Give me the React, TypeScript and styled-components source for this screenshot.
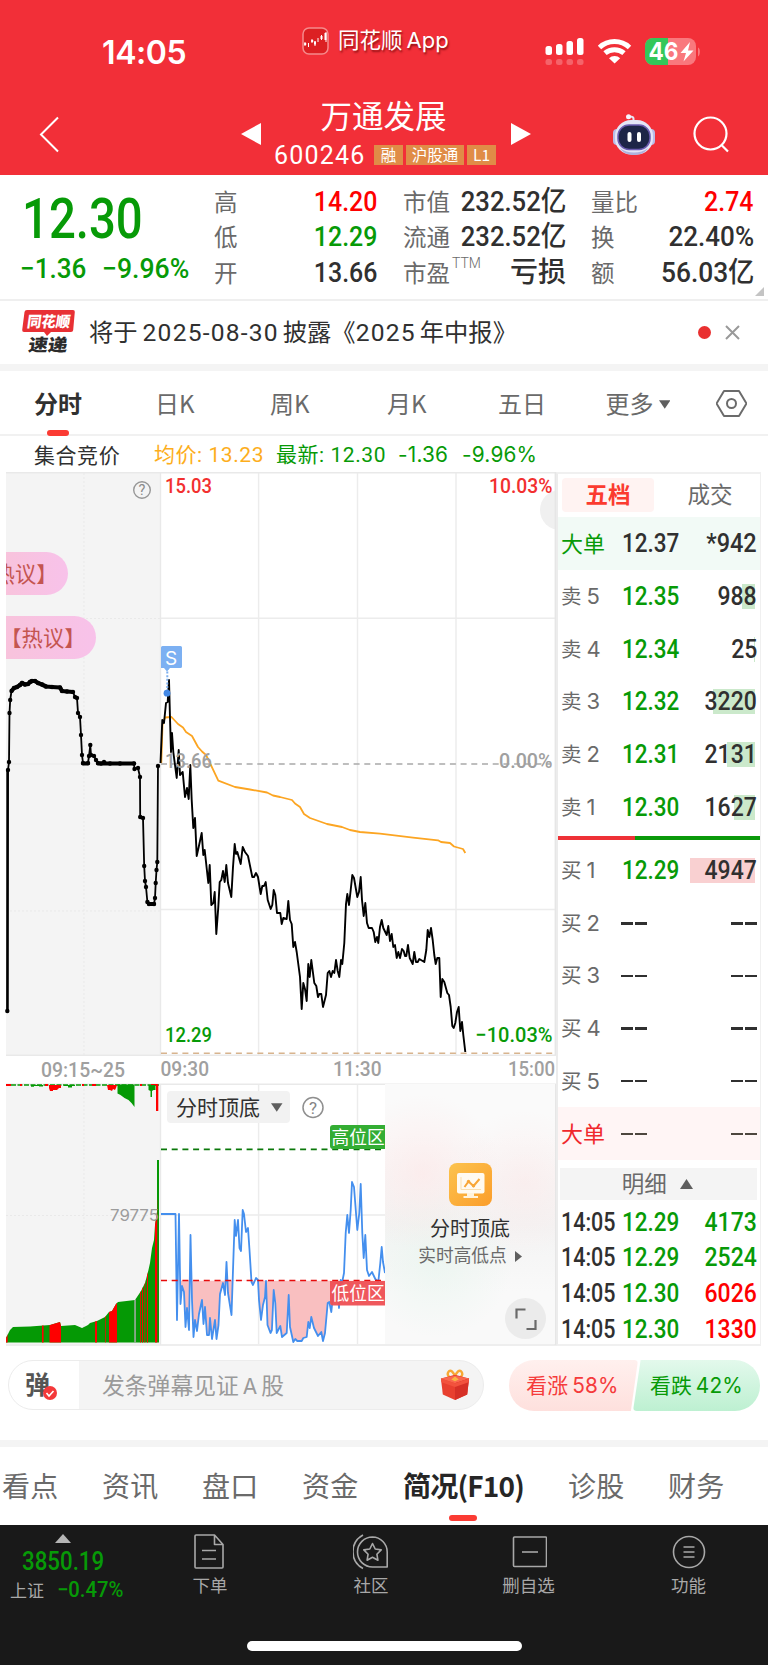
import React from "react";
import styled, { createGlobalStyle } from "styled-components";

const RED = "#f22f38";
const UP = "#fe0000";
const DOWN = "#079a07";
const INK = "#303030";
const GREY = "#6a6a6a";
const SANS = `"Noto Sans CJK SC", "Noto Sans", sans-serif`;
const DIGITS = `Roboto, "Noto Sans CJK SC", sans-serif`;

const Global = createGlobalStyle`
  * { box-sizing: border-box; }
  body { margin: 0; background: #fff; font-family: ${SANS}; color: ${INK}; }
`;

const Screen = styled.div`
  width: 768px;
  height: 1665px;
  display: flex;
  flex-direction: column;
  overflow: hidden;
  background: #fff;
`;

/* Condensed numerals; `$k` is the horizontal squeeze. */
const Num = styled.span<{ $size: number; $color?: string; $k?: number; $from?: string; $weight?: number }>`
  display: inline-block;
  font-family: ${DIGITS};
  font-size: ${(p) => p.$size}px;
  font-weight: ${(p) => p.$weight ?? 500};
  color: ${(p) => p.$color ?? INK};
  white-space: nowrap;
  transform: scaleX(${(p) => p.$k ?? 0.89});
  transform-origin: ${(p) => p.$from ?? "left"} center;
`;

/* ---------- header ---------- */
const Header = styled.header`
  height: 174.5px;
  flex: none;
  background: ${RED};
  color: #fff;
`;
const StatusBar = styled.div`
  display: grid;
  grid-template-columns: 302px 1fr 223px;
  height: 90px;
`;
const Clock = styled.div`
  font-family: Inter, sans-serif;
  font-weight: 600;
  font-size: 32px;
  line-height: 40px;
  padding: 33px 0 0 102px;
  letter-spacing: -0.4px;
`;
const Brand = styled.div`
  display: flex;
  align-items: center;
  gap: 9px;
  height: 28px;
  margin-top: 27px;
  font-size: 21.5px;
  line-height: 26px;
  white-space: nowrap;
  text-shadow: 1px 2px 2px rgba(90, 0, 0, 0.65);
  div { padding-bottom: 3px; }
  span { font-family: Inter, sans-serif; font-size: 22px; margin-left: 4px; }
`;
const Indicators = styled.div`
  display: flex;
  align-items: flex-start;
  padding-top: 37px;
`;
const NavBar = styled.div`
  display: flex;
  height: 84px;
`;
const NavSide = styled.div<{ $w: number; $pl: number; $pt: number }>`
  width: ${(p) => p.$w}px;
  padding: ${(p) => p.$pt}px 0 0 ${(p) => p.$pl}px;
  display: flex;
  align-items: flex-start;
`;
const TitleBlock = styled.div`
  width: 224px;
  margin-left: 13px;
  display: flex;
  flex-direction: column;
`;
const Title = styled.div`
  font-size: 31.5px;
  line-height: 40px;
  height: 50px;
  padding-top: 4px;
  text-align: center;
  width: 219px;
`;
const CodeRow = styled.div`
  display: flex;
  align-items: center;
  height: 30px;
  gap: 3px;
`;
const Code = styled.span`
  font-family: ${DIGITS};
  font-size: 25px;
  letter-spacing: 1.2px;
  width: 97px;
`;
const Tag = styled.span<{ $w: number }>`
  width: ${(p) => p.$w}px;
  height: 20px;
  line-height: 19px;
  font-size: 15.5px;
  text-align: center;
  background: #e08c47;
`;

/* ---------- quote ---------- */
const Quote = styled.section`
  display: flex;
  height: 126px;
  flex: none;
  border-bottom: 2px solid #efefef;
  position: relative;
`;
const Last = styled.div`
  width: 214px;
  padding-left: 20px;
`;
const LastPrice = styled.div`
  height: 72px;
  padding: 10px 0 0 2px;
  line-height: 68px;
`;
const Change = styled.div`
  display: flex;
  line-height: 44px;
  span:first-child { width: 82px; }
`;
const Facts = styled.div<{ $w: number; $gap: number }>`
  width: ${(p) => p.$w}px;
  margin-right: ${(p) => p.$gap}px;
  padding-top: 9px;
`;
const Fact = styled.div`
  display: flex;
  justify-content: space-between;
  align-items: center;
  height: 35.5px;
  line-height: 33px;
  white-space: nowrap;
`;
const FactLabel = styled.span`
  font-size: 23.5px;
  color: ${GREY};
  sup { font-size: 14px; position: relative; top: -5px; font-family: Roboto, sans-serif; font-weight: 300; margin-left: 2px; line-height: 0; }
`;
const Corner = styled.svg`
  position: absolute;
  right: 4px;
  bottom: 3px;
`;

/* ---------- news ---------- */
const News = styled.section`
  display: flex;
  align-items: center;
  height: 63.5px;
  flex: none;
  padding: 0 28px 0 22px;
  svg { overflow: visible; }
`;
const NewsText = styled.div`
  flex: 1;
  margin-left: 14px;
  padding-bottom: 4px;
  font-size: 24.3px;
  white-space: nowrap;
`;
const DateText = styled.span<{ $ml?: number }>`
  font-family: Roboto, sans-serif;
  letter-spacing: 1.2px;
  font-size: 24.6px;
  margin: 0 4px 0 ${(p) => p.$ml ?? 5}px;
`;
const Dot = styled.i`
  width: 13px;
  height: 13px;
  border-radius: 50%;
  background: #e93030;
  margin-right: 14px;
`;
const Band = styled.div`
  height: 7px;
  flex: none;
  background: #f4f4f4;
`;

/* ---------- period tabs ---------- */
const Periods = styled.nav`
  display: flex;
  height: 65px;
  flex: none;
  border-bottom: 2px solid #f1f1f1;
  padding-left: 34px;
  align-items: stretch;
`;
const Period = styled.div<{ $w: number; $on?: boolean }>`
  width: ${(p) => p.$w}px;
  line-height: 63px;
  font-size: 24px;
  color: ${(p) => (p.$on ? INK : GREY)};
  font-weight: ${(p) => (p.$on ? 700 : 400)};
  position: relative;
  white-space: nowrap;
  svg { vertical-align: 4px; margin-left: 5px; }
`;
const Underline = styled.i<{ $w: number; $x: number; $b: number }>`
  position: absolute;
  left: ${(p) => p.$x}px;
  bottom: ${(p) => p.$b}px;
  width: ${(p) => p.$w}px;
  height: 6px;
  border-radius: 3px;
  background: #fb3b33;
`;
const Summary = styled.div`
  display: flex;
  align-items: center;
  height: 36px;
  flex: none;
  padding: 1px 0 0 34px;
  font-size: 21px;
  white-space: nowrap;
`;
const SummaryItem = styled.span<{ $w: number; $c: string; $wide?: boolean; $drop?: number }>`
  width: ${(p) => p.$w}px;
  margin-top: ${(p) => p.$drop ?? 0}px;
  line-height: 30px;
  color: ${(p) => p.$c};
  font-family: ${(p) => (p.$wide ? "Inter, sans-serif" : DIGITS)};
  font-size: ${(p) => (p.$wide ? 20.8 : 21)}px;
  letter-spacing: ${(p) => (p.$wide ? 0.2 : 0.55)}px;
`;

/* ---------- market ---------- */
const Market = styled.section`
  display: flex;
  height: 874px;
  flex: none;
  padding-left: 6px;
`;
const ChartColumn = styled.div`
  position: relative;
  width: 550px;
  height: 874px;
  svg { display: block; overflow: visible; }
`;
const Promo = styled.div`
  position: absolute;
  left: 379px;
  top: 612px;
  width: 170px;
  height: 260px;
  display: flex;
  flex-direction: column;
  align-items: center;
  padding-top: 79px;
  background:
    radial-gradient(circle at 22% 34%, rgba(255, 226, 226, 0.5), transparent 36%),
    radial-gradient(circle at 82% 38%, rgba(255, 226, 226, 0.4), transparent 34%),
    radial-gradient(circle at 30% 68%, rgba(232, 245, 238, 0.7), transparent 36%),
    linear-gradient(#fafafa 20%, #f3f3f3 54%, #f9f9f9 80%);
`;
const PromoTitle = styled.div`
  font-size: 20px;
  line-height: 28px;
  margin-top: 8px;
`;
const PromoSub = styled.div`
  font-size: 17.7px;
  line-height: 24px;
  color: ${GREY};
  svg { display: inline-block; margin-left: 8px; }
`;
const Expand = styled.div`
  position: absolute;
  right: 9px;
  bottom: 5px;
  width: 41px;
  height: 41px;
  border-radius: 50%;
  background: #ebebeb;
  display: grid;
  place-items: center;
`;
const Selector = styled.div`
  position: absolute;
  left: 161px;
  top: 619px;
  width: 123px;
  height: 32px;
  line-height: 28px;
  border-radius: 4px;
  background: #f2f2f2;
  display: flex;
  align-items: center;
  justify-content: space-between;
  padding: 0 8px 0 9px;
  font-size: 21px;
  span { padding-bottom: 3px; }
`;
const Bubble = styled.div<{ $y: number; $w: number }>`
  position: absolute;
  left: 0;
  top: ${(p) => p.$y}px;
  width: ${(p) => p.$w}px;
  height: 43px;
  border-radius: 0 22px 22px 0;
  overflow: hidden;
  display: flex;
  justify-content: flex-end;
  align-items: center;
  padding: 0 10px 2px 0;
  font-size: 21.3px;
  color: #c45550;
  background: linear-gradient(90deg, #f8c3dc, #f8c2ea);
  white-space: nowrap;
`;

/* ---------- order book ---------- */
const Book = styled.div`
  width: 204.5px;
  height: 874px;
  border: 2px solid #f0f0f0;
  border-left: 2px solid #ececec;
  border-right-width: 1.5px;
`;
const BookTabs = styled.div`
  display: flex;
  height: 43px;
  padding: 4px 0 0 4px;
`;
const BookTab = styled.div<{ $on?: boolean }>`
  flex: none;
  width: ${(p) => (p.$on ? 92 : 112)}px;
  height: 34px;
  line-height: 31px;
  text-align: center;
  font-size: 22.5px;
  border-radius: 4px;
  color: ${(p) => (p.$on ? "#fb3b2f" : GREY)};
  background: ${(p) => (p.$on ? "#fff3f2" : "transparent")};
  font-weight: ${(p) => (p.$on ? 700 : 400)};
`;
const Level = styled.div<{ $bg?: string; $h?: number }>`
  display: grid;
  grid-template-columns: 60.5px minmax(0, 1fr) auto;
  align-items: center;
  height: ${(p) => p.$h ?? 52.8}px;
  padding: 0 2.5px 0 3px;
  background: ${(p) => p.$bg ?? "transparent"};
`;
const LevelLabel = styled.span<{ $c?: string }>`
  padding-bottom: 3px;
  font-size: ${(p) => (p.$c ? 22 : 20.5)}px;
  color: ${(p) => p.$c ?? GREY};
  white-space: nowrap;
  b { font-family: Inter, sans-serif; font-weight: 400; font-size: 22px; margin-left: 5px; }
`;
const Volume = styled.div<{ $bar: number; $c: string }>`
  height: 25px;
  line-height: 25px;
  width: 72px;
  text-align: right;
  background: linear-gradient(${(p) => p.$c}, ${(p) => p.$c}) no-repeat right 2.5px top / ${(p) => p.$bar}px 25px;
`;
const Dashes = styled.i<{ $c?: string }>`
  display: flex;
  justify-content: space-between;
  width: 26px;
  height: 2.4px;
  margin-left: -0.5px;
  &::before, &::after { content: ""; width: 12px; background: ${(p) => p.$c ?? INK}; }
`;
const Balance = styled.div`
  height: 4px;
  background: linear-gradient(90deg, #ee3136 38%, #0a990a 38%);
  margin: 2.5px 0 4px;
`;
const DetailHead = styled.div`
  height: 32px;
  margin: 7.5px 3px 5px 2px;
  background: #f4f4f4;
  display: flex;
  align-items: center;
  justify-content: center;
  gap: 13px;
  padding-left: 20px;
  padding-right: 22px;
  font-size: 22.5px;
  line-height: 28px;
  color: ${GREY};
  span { padding-bottom: 3px; }
`;

/* ---------- sentiment ---------- */
const Sentiment = styled.section`
  display: flex;
  height: 94px;
  flex: none;
  padding: 14px 8px 0;
`;
const Composer = styled.div`
  flex: none;
  width: 476px;
  height: 50px;
  border: 1.5px solid #ececec;
  border-radius: 25px;
  display: flex;
  align-items: center;
  padding-right: 13px;
  background: linear-gradient(90deg, #fff 70px, #f4f4f4 70px);
`;
const Danmu = styled.div`
  position: relative;
  width: 93px;
  height: 48px;
  line-height: 44px;
  padding-left: 16px;
  font-size: 25px;
  font-weight: 700;
  color: #555;
  svg { position: absolute; left: 34px; top: 25px; }
`;
const Placeholder = styled.div`
  flex: 1;
  padding-bottom: 2px;
  font-size: 22.8px;
  color: #9a9a9a;
  span { font-family: Inter, sans-serif; margin: 0 4px; font-size: 21px; }
`;
const Votes = styled.div`
  display: flex;
  flex: none;
  margin-left: 25px;
`;
const Vote = styled.div<{ $up?: boolean }>`
  width: ${(p) => (p.$up ? 129 : 127)}px;
  margin-left: ${(p) => (p.$up ? 0 : -5)}px;
  height: 51px;
  line-height: 49px;
  text-align: center;
  font-size: 20.9px;
  padding-right: ${(p) => (p.$up ? 2 : 0)}px;
  white-space: nowrap;
  color: ${(p) => (p.$up ? "#f53b3b" : "#079a07")};
  background: ${(p) => (p.$up ? "linear-gradient(#fff0ee, #fee0dd)" : "linear-gradient(#e3f9ec, #bdf0d1)")};
  border-radius: ${(p) => (p.$up ? "25px 4px 4px 25px" : "4px 25px 25px 4px")};
  clip-path: ${(p) => (p.$up ? "polygon(0 0, 100% 0, 94.5% 100%, 0 100%)" : "polygon(6% 0, 100% 0, 100% 100%, 0 100%)")};
  span { font-family: Inter, sans-serif; margin-left: 4px; font-size: 20.8px; letter-spacing: 0.2px; }
`;

/* ---------- sections ---------- */
const Sections = styled.nav`
  display: flex;
  height: 78px;
  flex: none;
  padding-left: 2px;
`;
const Section = styled.div<{ $w: number; $on?: boolean }>`
  width: ${(p) => p.$w}px;
  position: relative;
  flex: none;
  font-size: 28px;
  line-height: 76px;
  white-space: nowrap;
  color: ${(p) => (p.$on ? "#262626" : GREY)};
  font-weight: ${(p) => (p.$on ? 700 : 400)};
  letter-spacing: ${(p) => (p.$on ? -0.8 : 0.2)}px;
`;

/* ---------- toolbar ---------- */
const Toolbar = styled.footer`
  flex: 1;
  background: #191919;
  display: flex;
  flex-direction: column;
  align-items: center;
`;
const Tools = styled.div`
  display: flex;
  width: 100%;
  height: 116px;
`;
const Index = styled.div`
  flex: none;
  width: 126px;
  display: flex;
  flex-direction: column;
  align-items: center;
  padding-top: 9px;
  > span { margin-top: 4px; }
`;
const IndexChange = styled.div`
  display: flex;
  align-items: center;
  gap: 13px;
  width: 126px;
  padding-left: 10px;
  height: 26px;
  color: #a8a8a8;
  font-size: 17px;
  white-space: nowrap;
  > * { flex: none; }
`;
const Tool = styled.div<{ $w: number }>`
  width: ${(p) => p.$w}px;
  display: flex;
  flex-direction: column;
  align-items: center;
  padding-top: 8px;
  color: #a8a8a8;
  font-size: 17.5px;
  line-height: 28px;
  gap: 1px;
`;
const HomeBar = styled.i`
  width: 275px;
  height: 10px;
  border-radius: 5px;
  background: #fff;
`;

/* ---------- data ---------- */
const AUCTION: [number, number][] = [
  [7.3, 1011], [8, 770], [9, 762], [9.5, 713], [10.2, 700], [11.5, 691], [14, 688], [17, 687], [20, 685], [22, 683], [25, 684.5], [28, 684], [30, 682], [32, 681], [35, 681], [38, 683],
  [42, 684.5], [46, 686.5], [52, 687], [60, 687.5], [62, 691], [67, 691.5], [73, 692], [75, 697], [77, 698], [78, 713], [80, 717], [81, 735], [82, 755], [83, 763], [88, 763], [89, 756],
  [90.3, 745], [91, 755], [94, 756], [96, 760], [98, 763], [101, 763.5], [104, 762], [110, 763.5], [120, 763.5], [134, 763.5], [134.5, 769], [138, 768], [140, 777], [140.2, 817],
  [143, 818], [144.2, 866], [145, 881], [146, 887], [147.4, 902], [149, 904], [154, 904], [155, 898], [155.7, 883], [156.5, 870], [157.3, 862], [158, 766],
];

const PRICE = `160.5,763 162.3,720 164,723 166,703 167.7,702 169,680 170,718 171,752 172,733 173.3,752 176.7,778 178.7,750 180,775 182.7,772 185,797 187,788 188.7,799 190.3,765 191.7,800 193.3,828 195,818 196.7,856 198.7,847 201.7,833 203.3,855 204.7,850 208.3,883 209.7,865 211.3,905 213.3,903 214.7,892 216.3,934 218.3,907 219.7,882 221.3,880 223,871 224.7,882 226.3,865 228,883 231.3,897 233,867 234.7,844 236,854 237.3,852 240.7,864 242.7,847 245,852 248,856 252.3,877 254,877 256,873 258,877 260.7,894 262.3,886 264,886 265.7,882 267.7,900 270.7,909 272.3,905 273.7,890 275.3,895 277,913 280.3,913 281.7,924 283.3,918 286.7,919 288.3,901 290,920 291.7,924 293.3,947 295,942 296.7,952 300,977 301.7,1009 303.3,983 305,989 306.7,1001 308.3,964 309.7,977 311.3,960 314.3,983 316.3,986 318,997 319.3,994 321.3,994 323,1007 326,995 327.7,973 329.3,971 331,977 332.7,971 334.3,973 336,960 337.7,971 339.3,977 341,960 342.3,964 344.3,943 346,904 347.3,894 349,905 350.7,890 352.3,875 354,878 357.3,897 359,892 360.7,877 362,900 363.7,916 365.3,903 367,923 368.7,928 372,928 373.7,932 375.3,942 377,937 378.3,943 380,927 381.7,920 383.3,928 386.7,935 388.3,926 390,941 391.7,934 393.3,947 395,945 396.7,958 398.3,952 400,958 402,949 403.7,951 405,956 406.3,956 408,945 409.7,958 412.7,964 414.3,952 416,962 417.7,962 419.3,959 424.3,962 426.3,950 427.7,930 429.3,937 431,928 432.7,940 434.3,955 435.7,964 437.3,958 439.3,958 440.7,997 442.3,979 444.3,982 447.3,993 449,995 450.7,1007 452.3,1026 453.7,1028 455.3,1023 457,1012 458.7,1007 460.3,1031 462,1022 463.3,1035 465.3,1052`;

const AVERAGE = `161.3,763 162.5,725 165,717.5 171.5,717 178,724 183,727.5 186,732 192,736 198,747 202,751.5 206,755 209.5,762 218.3,780.7 235,787 250,789.5 267,792.5 273,795.5 280,797 292,800 295,803.5 300,807 304,814 310,818 327,824 342,827 350,830 360,832 380,833.7 413,837.7 438,840.3 441,842 450,843 454,846.5 463,849 465.3,853`;

const SIGNAL = `161,1214 175.5,1214 177,1320 179,1214 180.5,1304 182,1286 184,1292 185.5,1327 187,1308 189,1330 190.5,1235 192,1300 193.5,1337 195,1320 197,1331 199,1314 202,1300 203.5,1324 205,1307 207,1335 209,1335 210,1318 212,1339 215,1320 216.5,1339 218.5,1325 220,1294 223,1283 225,1295 226.5,1262 228,1293 231.5,1315 233,1270 234.7,1220 236,1236 238,1220 239.5,1248 241,1251 242.7,1210 244,1214 246,1232 248,1228 249.5,1250 251.5,1282 253,1285 256,1278 258,1280 259,1300 261,1320 263,1305 265,1297 266,1281 267.5,1325 270.5,1333 271.9,1330 273.7,1290 275.3,1303 276.7,1333 280.3,1326 282,1337 286.7,1333 288.7,1295 290,1327 293.3,1342 295.3,1339 297.3,1341 301.7,1341 303.3,1338 306.7,1337 308.3,1322 309.7,1328 311.3,1317 314,1328 318,1336 321.3,1332 323,1341 325,1333 327.7,1303 329.3,1302 331.3,1312 333.3,1293 335,1295 337.7,1290 339,1308 340.7,1280 342,1283 344,1273 345.7,1233 347.3,1215 349,1233 350.7,1210 352,1182 354,1187 357.3,1230 359.3,1213 360.7,1184 362.3,1233 363.7,1258 365.3,1235 367,1270 369,1276 372,1272 375.3,1279 378.3,1282 380.3,1263 381.7,1247 383,1262 385,1273`;

const VOLUME_AREA = "6,1342.5 6,1338 8,1334 10,1330 13,1327 30,1326.5 50,1325 60,1322 61,1326 75,1325 82,1328 88,1325 90,1323 97,1321 105,1317 109,1312 112,1311 116,1304 118,1302 135,1300 141,1291 145,1283 148,1272 150,1263 152,1248 154,1240 155,1225 157,1212 157,1160 159,1160 159,1342.5";
const VOLUME_RED: [number, number][] = [[6, 1.6], [42, 1.6], [49.5, 11.5], [95, 2], [105.3, 0.7], [109, 8], [140, 0.8], [142, 1], [144.5, 0.8], [147, 1], [155, 2.2]];

const tick = { fontFamily: "Roboto, sans-serif", fontWeight: 500, fontSize: 21 } as const;
const guide = { stroke: "#ececec", strokeWidth: 1.4 } as const;

function Charts() {
  return (
    <svg width="550" height="874" viewBox="6 472 550 874" fill="none">
      <defs>
        <clipPath id="below"><rect x="161" y="1280.5" width="224" height="63" /></clipPath>
        <clipPath id="vol"><polygon points={VOLUME_AREA} /></clipPath>
        <clipPath id="pane"><rect x="6" y="472" width="549" height="874" /></clipPath>
      </defs>
      <rect x="6" y="472" width="154" height="583.5" fill="#f4f4f4" />
      <rect x="6" y="1084" width="154" height="260" fill="#f4f4f4" />
      <g stroke="#e9e9e9" strokeDasharray="2 2">
        <path d="M84 473V1055M84 1085V1344M6 618.5H160M6 911H160M6 1215.5H160" />
      </g>
      <path d="M6 764H160" stroke="#eaeaea" />
      <g {...guide}>
        <path d="M258.6 473V1055M357.5 473V1055M456 473V1055M161 618.3H555M161 909.5H555" />
        <path d="M160.5 472V1055M160.5 1084V1345M6 472.7H556M6 1055.3H556M6 1084.3H556M6 1345H556" stroke="#e9e9e9" />
        <path d="M258.6 1085V1344M357.5 1085V1344M161 1215H385" />
      </g>
      <circle cx="560" cy="510" r="20" fill="#f0f0f0" clipPath="url(#pane)" />
      <path d="M555.3 472V1055M555.3 1084V1345" stroke="#e6e6e6" strokeWidth="1.4" />

      <path d="M161 764H550" stroke="#a9a9a9" strokeWidth="1.6" strokeDasharray="6 4.7" />
      <path d="M161 1053.3H555" stroke="#d8b48e" strokeWidth="1.4" strokeDasharray="6 4.7" />

      <polyline points={AUCTION.map((p) => p.join(",")).join(" ")} stroke="#000" strokeWidth="1.8" strokeLinejoin="round" />
      <polyline points={AUCTION.slice(5, 23).map((p) => p.join(",")).join(" ")} stroke="#000" strokeWidth="4.2" strokeLinejoin="round" />
      <path d="M98 763.5H134M83 763.5H88M149 904H154" stroke="#000" strokeWidth="4.2" strokeLinecap="round" />
      <path d="M7.500 1011V770" stroke="#000" strokeWidth="2.400" />
      {AUCTION.map(([x, y], i) => <circle key={i} cx={x} cy={y} r="2.2" fill="#000" />)}

      <polyline points={AVERAGE} stroke="#fca522" strokeWidth="1.8" strokeLinejoin="round" />
      <polyline points={PRICE} stroke="#000" strokeWidth="1.9" strokeLinejoin="round" />

      <g {...tick}>
        <text x="165" y="493" fill="#f2302f" textLength="47" lengthAdjust="spacingAndGlyphs">15.03</text>
        <text x="489" y="493" fill="#f2302f" textLength="63.5" lengthAdjust="spacingAndGlyphs">10.03%</text>
        <text x="165" y="767.5" fill="#a0a0a0" textLength="47" lengthAdjust="spacingAndGlyphs">13.66</text>
        <text x="499" y="767.5" fill="#a0a0a0" textLength="53.5" lengthAdjust="spacingAndGlyphs">0.00%</text>
        <text x="165" y="1042" fill={DOWN} textLength="47" lengthAdjust="spacingAndGlyphs">12.29</text>
        <text x="475.5" y="1042" fill={DOWN} textLength="77" lengthAdjust="spacingAndGlyphs">−10.03%</text>
        <g fill="#a0a0a0">
          <text x="41" y="1077" textLength="84" lengthAdjust="spacingAndGlyphs">09:15~25</text>
          <text x="160.500" y="1076" textLength="48.500" lengthAdjust="spacingAndGlyphs">09:30</text>
          <text x="333" y="1076" textLength="48.500" lengthAdjust="spacingAndGlyphs">11:30</text>
          <text x="508" y="1076" textLength="47" lengthAdjust="spacingAndGlyphs">15:00</text>
        </g>
      </g>

      <path d="M167.300 668V690" stroke="#7baeef" strokeWidth="2" strokeDasharray="2 1.600" />
      <circle cx="167" cy="693.200" r="3.400" fill="#4489e6" />
      <path d="M161 647.500a1.500 1.500 0 0 1 1.500 -1.500h18a1.500 1.500 0 0 1 1.500 1.500v19a1.500 1.500 0 0 1 -1.500 1.500h-10.500l-3 3.500-3-3.500h-3z" fill="#7cb0f2" />
      <text x="171" y="664.500" textAnchor="middle" fill="#fff" fontFamily="Inter, sans-serif" fontSize="19">S</text>

      <circle cx="142" cy="490" r="8.300" stroke="#979797" strokeWidth="1.400" />
      <text x="142" y="495.300" textAnchor="middle" fill="#8a8a8a" fontFamily="Roboto, sans-serif" fontSize="14.500">?</text>

      <polygon points={VOLUME_AREA} fill="#059905" />
      <g clipPath="url(#vol)">
        {VOLUME_RED.map(([x, w]) => <rect key={x} x={x} y={1200} width={w} height={143} fill="#fe0000" />)}
        <rect x="134.300" y="1295" width="1.500" height="48" fill="#aaa" />
      </g>
      <path d="M11 1085H160" stroke="#059905" strokeWidth="1.500" strokeDasharray="5 1.500" />
      <path d="M6 1085H11M20 1085h2M45 1085h3M82 1085h2M92 1085h4M140 1085h2M151 1085h7" stroke="#fe0000" strokeWidth="2" />
      <path d="M31 1085h12v1.500h-4v-.5h-5v.8h-3zM64 1085h11v1h-3v1.500h-4v-1.500h-4zM117.500 1084.500h17v22.500l-3-4-3-3-4-2-4-3-3-1.500zM148.500 1085h7v5h-2l-1.500 1v6h-1.500v-6l-2-1z" fill="#059905" />
      <path d="M49 1085h12v3h-2l-2 2h-4v1h-3l-1-3zM107 1085h10l-1 3-1 2-2-1-1 2-2-1h-2zM156 1084.500h2.300v26.500h-2.300z" fill="#fe0000" />
      <text x="110" y="1221" fill="#9c9c9c" fontFamily="Inter, sans-serif" fontSize="16.500" textLength="49" lengthAdjust="spacingAndGlyphs">79775</text>

      <path d="M161 1149.400H385" stroke="#0a780a" strokeWidth="1.600" strokeDasharray="6 4.700" />
      <polygon points={`161,1280.500 ${SIGNAL} 385,1280.500`} fill="#f9bfc0" clipPath="url(#below)" />
      <polyline points={SIGNAL} stroke="#448fee" strokeWidth="1.800" strokeLinejoin="round" />
      <path d="M161 1280.500H385" stroke="#e60b0b" strokeWidth="1.600" strokeDasharray="6 4.700" />
      <path d="M333 1125h52v24h-52a3 3 0 0 1 -3 -3v-18a3 3 0 0 1 3 -3z" fill="#33ad33" />
      <path d="M330 1281h55v24.500h-52a3 3 0 0 1 -3 -3z" fill="#ee4f53" fillOpacity=".95" />
      <g fill="#fff" fontFamily='"Noto Sans CJK SC", sans-serif' fontSize="17.700">
        <text x="331.500" y="1143.500">高位区</text>
        <text x="331.500" y="1299.500">低位区</text>
      </g>
      <circle cx="313" cy="1107.500" r="10" stroke="#8f8f8f" strokeWidth="1.500" />
      <text x="313" y="1113.500" textAnchor="middle" fill="#858585" fontFamily="Roboto, sans-serif" fontSize="17">?</text>
    </svg>
  );
}

const TriDown = () => (
  <svg width="11.5" height="9" viewBox="0 0 12 9"><path d="M0 0h12L6 9z" fill="#5f5f5f" /></svg>
);

const SELLS: [string, string, string, number][] = [
  ["5", "12.35", "988", 13], ["4", "12.34", "25", 1], ["3", "12.32", "3220", 42], ["2", "12.31", "2131", 28], ["1", "12.30", "1627", 21],
];
const TRADES: [string, string, string][] = [
  ["12.29", "4173", DOWN], ["12.29", "2524", DOWN], ["12.30", "6026", UP], ["12.30", "1330", UP],
];

function OrderBook() {
  return (
    <Book>
      <BookTabs><BookTab $on>五档</BookTab><BookTab>成交</BookTab></BookTabs>
      <Level $bg="#f2faf6" $h={53}>
        <LevelLabel $c={DOWN}>大单</LevelLabel>
        <Num $size={25} $k={0.9}>12.37</Num>
        <Num $size={25} $k={0.94} $from="right">*942</Num>
      </Level>
      {SELLS.map(([n, price, vol, bar]) => (
        <Level key={n}>
          <LevelLabel>卖<b>{n}</b></LevelLabel>
          <Num $size={25} $k={0.9} $color={DOWN}>{price}</Num>
          <Volume $bar={bar} $c="#cbe9cb"><Num $size={25} $k={0.92} $from="right">{vol}</Num></Volume>
        </Level>
      ))}
      <Balance />
      <Level $h={52.6}>
        <LevelLabel>买<b>1</b></LevelLabel>
        <Num $size={25} $k={0.9} $color={DOWN}>12.29</Num>
        <Volume $bar={65} $c="#f9d0d1"><Num $size={25} $k={0.92} $from="right">4947</Num></Volume>
      </Level>
      {["2", "3", "4", "5"].map((n) => (
        <Level key={n} $h={52.6}><LevelLabel>买<b>{n}</b></LevelLabel><Dashes /><Dashes /></Level>
      ))}
      <Level $bg="#fff5f5" $h={52.6}>
        <LevelLabel $c="#f0282c">大单</LevelLabel><Dashes $c="#4d463e" /><Dashes $c="#4d463e" />
      </Level>
      <DetailHead>
        <span>明细</span>
        <svg width="13" height="10" viewBox="0 0 13 10"><path d="M6.500 0L13 10H0z" fill="#5f5f5f" /></svg>
      </DetailHead>
      {TRADES.map(([price, vol, c], i) => (
        <Level key={i} $h={35.6}>
          <Num $size={25} $k={0.86}>14:05</Num>
          <Num $size={25} $k={0.9} $color={DOWN}>{price}</Num>
          <Num $size={25} $k={0.92} $color={c} $from="right">{vol}</Num>
        </Level>
      ))}
    </Book>
  );
}

const AppBadge = () => (
  <svg width="27" height="28" viewBox="0 0 27 28" fill="none">
    <rect x="1" y="1" width="25" height="26" rx="6" fill="#dc2023" stroke="#f58a8c" strokeWidth="1.500" />
    <path d="M3 15v4M6.500 16v4M10 12v4M13 14v5M16 11v4M19.500 8v5M24 5v10" stroke="#fff" strokeWidth="1" />
    <path d="M2.200 16h2v2h-2zM9.200 13h2v2h-2zM12 14.500h2v3h-2zM18.500 9h2v3h-2zM22.500 6h2v7h-2z" fill="#fff" />
  </svg>
);

const StatusIcons = () => (
  <svg width="160" height="30" viewBox="545 37 160 30" fill="none">
    <g fill="#fff">
      <rect x="545.500" y="46" width="6.500" height="9" rx="2.500" /><rect x="556" y="44" width="6.500" height="11" rx="2.500" />
      <rect x="566.500" y="41" width="6.500" height="14" rx="2.500" /><rect x="577" y="38" width="6.500" height="17" rx="2.500" />
    </g>
    <g fill="#fff" fillOpacity=".25">
      <rect x="545.500" y="59" width="6.500" height="6" rx="2.500" /><rect x="556" y="59" width="6.500" height="6" rx="2.500" />
      <rect x="566.500" y="59" width="6.500" height="6" rx="2.500" /><rect x="577" y="59" width="6.500" height="6" rx="2.500" />
    </g>
    <path d="M599.500 47.500a22 22 0 0 1 30 0M605 53.200a14.500 14.500 0 0 1 19 0" stroke="#fff" strokeWidth="5" />
    <path d="M614.600 63.500l-5.600-5.300a8 8 0 0 1 11.200 0z" fill="#fff" />
    <rect x="645" y="38" width="51" height="27" rx="8" fill="#f9787d" />
    <path d="M653 38h15v27h-15a8 8 0 0 1 -8 -8v-11a8 8 0 0 1 8 -8z" fill="#34c759" />
    <path d="M698 47.500c2.500.5 2.500 8 0 9z" fill="#f9787d" />
    <text x="648.500" y="60" fill="#fff" fontFamily="Inter, sans-serif" fontWeight="700" fontSize="24" textLength="30" lengthAdjust="spacingAndGlyphs">46</text>
    <path d="M690 42l-9.500 11h5.500l-2.500 8.500 10-11h-5.500z" fill="#fff" />
  </svg>
);

const Robot = () => (
  <svg width="44" height="42" viewBox="0 0 44 42" fill="none">
    <path d="M21.500 7V4.500c0-1.500-1.500-2-4-2" stroke="#e5e6f5" strokeWidth="2" />
    <circle cx="16.500" cy="2.800" r="2.500" fill="#f6f5ff" />
    <rect x="1" y="15" width="8" height="16" rx="4" fill="#b9bce8" /><rect x="35" y="15" width="8" height="16" rx="4" fill="#b9bce8" />
    <rect x="3" y="6" width="38" height="34.500" rx="16" fill="#e4e5f6" />
    <path d="M8 34c7 6 21 6 28 0-3 5-8 7-14 7s-11-2-14-7z" fill="#aeb2dc" />
    <rect x="6" y="11" width="32" height="24.500" rx="11" fill="#1d2547" stroke="#6b5bb0" strokeWidth="1.500" />
    <path d="M17.500 20v6M27 20v6" stroke="#fff" strokeWidth="4" strokeLinecap="round" />
  </svg>
);

const ExpressLogo = () => (
  <svg width="53" height="44" viewBox="22 310 53 44">
    <path d="M27 310h46q2 0 1.800 2l-1.600 18q-.2 2-2.200 2H51l-4 4-3-4H24q-2 0-1.800-2l2.300-18q.3-2 2.500-2z" fill="#e83034" />
    <g fontFamily='"Noto Sans CJK SC", sans-serif' fontWeight="900" transform="skewX(-8)">
      <text x="72.500" y="327" fontSize="15" fill="#fff" textLength="43" lengthAdjust="spacingAndGlyphs">同花顺</text>
      <text x="77" y="351" fontSize="17" fill="#2b2b2b" textLength="39" lengthAdjust="spacingAndGlyphs">速递</text>
    </g>
  </svg>
);

const Gift = () => (
  <svg width="30" height="32" viewBox="0 0 32 34">
    <path d="M16 10C9 10 7 6 9 3s6 0 7 6c1-6 5-9 7-6s0 7-7 7z" fill="none" stroke="#f7a935" strokeWidth="2.500" />
    <path d="M1 10l15-4 15 4-2 17-13 6-13-6z" fill="#e8402f" />
    <path d="M1 10l15 5 15-5-15-3z" fill="#f9694f" />
    <path d="M16 15v18l13-6 2-17z" fill="#d63026" />
    <path d="M1 10l15 5v4L1.500 14zM31 10l-15 5v4l14.500-5z" fill="#f2523d" />
    <path d="M12 11l4-3 4 3-4 2z" fill="#f9b545" />
  </svg>
);

export default function App() {
  return (
    <Screen>
      <Global />
      <Header>
        <StatusBar>
          <Clock>14:05</Clock>
          <Brand><AppBadge /><div>同花顺<span>App</span></div></Brand>
          <Indicators><StatusIcons /></Indicators>
        </StatusBar>
        <NavBar>
          <NavSide $w={241} $pl={39} $pt={26}>
            <svg width="20" height="38" viewBox="0 0 20 38" fill="none"><path d="M19 1.500L2 18.500l17 17" stroke="#fff" strokeWidth="2" /></svg>
          </NavSide>
          <NavSide $w={20} $pl={0} $pt={33}>
            <svg width="20" height="22"><path d="M20 0v22L0 11z" fill="#fff" /></svg>
          </NavSide>
          <TitleBlock>
            <Title>万通发展</Title>
            <CodeRow><Code>600246</Code><Tag $w={29}>融</Tag><Tag $w={58}>沪股通</Tag><Tag $w={29}>L1</Tag></CodeRow>
          </TitleBlock>
          <NavSide $w={114} $pl={13} $pt={33}>
            <svg width="20" height="22"><path d="M0 0v22l20-11z" fill="#fff" /></svg>
          </NavSide>
          <NavSide $w={81} $pl={0} $pt={24}><Robot /></NavSide>
          <NavSide $w={75} $pl={0} $pt={26}>
            <svg width="37" height="37" viewBox="0 0 37 37" fill="none" stroke="#fff" strokeWidth="2.200"><circle cx="17.500" cy="17.500" r="16" /><path d="M28.500 29l6.500 6.500" /></svg>
          </NavSide>
        </NavBar>
      </Header>

      <Quote>
        <Last>
          <LastPrice><Num $size={56} $k={0.845} $color={DOWN}>12.30</Num></LastPrice>
          <Change><Num $size={28} $color={DOWN} $k={0.93}>−1.36</Num><Num $size={28} $color={DOWN} $k={0.95}>−9.96%</Num></Change>
        </Last>
        <Facts $w={163} $gap={26}>
          <Fact><FactLabel>高</FactLabel><Num $size={28} $color={UP} $from="right">14.20</Num></Fact>
          <Fact><FactLabel>低</FactLabel><Num $size={28} $color={DOWN} $from="right">12.29</Num></Fact>
          <Fact><FactLabel>开</FactLabel><Num $size={28} $from="right">13.66</Num></Fact>
        </Facts>
        <Facts $w={163} $gap={25}>
          <Fact><FactLabel>市值</FactLabel><Num $size={28} $k={0.915} $from="right">232.52亿</Num></Fact>
          <Fact><FactLabel>流通</FactLabel><Num $size={28} $k={0.915} $from="right">232.52亿</Num></Fact>
          <Fact><FactLabel>市盈<sup>TTM</sup></FactLabel><Num $size={28} $k={1} $from="right">亏损</Num></Fact>
        </Facts>
        <Facts $w={163} $gap={0}>
          <Fact><FactLabel>量比</FactLabel><Num $size={28} $color={UP} $from="right">2.74</Num></Fact>
          <Fact><FactLabel>换</FactLabel><Num $size={28} $k={0.93} $from="right">22.40%</Num></Fact>
          <Fact><FactLabel>额</FactLabel><Num $size={28} $k={0.94} $from="right">56.03亿</Num></Fact>
        </Facts>
        <Corner width="9" height="9"><path d="M9 0v9H0z" fill="#c4c4c4" /></Corner>
      </Quote>

      <News>
        <ExpressLogo />
        <NewsText>将于<DateText>2025-08-30</DateText>披露《<DateText $ml={0}>2025</DateText>年中报》</NewsText>
        <Dot />
        <svg width="15" height="15" viewBox="0 0 15 15" stroke="#999" strokeWidth="2"><path d="M1 1l13 13M14 1L1 14" /></svg>
      </News>
      <Band />

      <Periods>
        <Period $w={121} $on>分时<Underline $w={22} $x={13} $b={-2} /></Period>
        <Period $w={115}>日K</Period>
        <Period $w={117}>周K</Period>
        <Period $w={111}>月K</Period>
        <Period $w={107.5}>五日</Period>
        <Period $w={110.5}>更多<TriDown /></Period>
        <svg width="31" height="63" viewBox="716 371 31 63" fill="none" stroke="#6b6b6b" strokeWidth="2"><path d="M724 391h15l7.500 12.500L739 416h-15l-7.500-12.500z" strokeLinejoin="round" /><circle cx="731.500" cy="403.500" r="4.500" /></svg>
      </Periods>

      <Summary>
        <SummaryItem $w={120} $c={INK} $drop={2}>集合竞价</SummaryItem>
        <SummaryItem $w={122} $c="#fdae1c">均价: 13.23</SummaryItem>
        <SummaryItem $w={122} $c={DOWN}>最新: 12.30</SummaryItem>
        <SummaryItem $w={64} $c={DOWN} $wide>-1.36</SummaryItem>
        <SummaryItem $w={90} $c={DOWN} $wide>-9.96%</SummaryItem>
      </Summary>

      <Market>
        <ChartColumn>
          <Charts />
          <Bubble $y={80} $w={61.5}>【热议】</Bubble>
          <Bubble $y={144} $w={89.5}>【热议】</Bubble>
          <Selector><span>分时顶底</span><TriDown /></Selector>
          <Promo>
            <svg width="43" height="43" viewBox="0 0 43 43" fill="none">
              <defs><linearGradient id="amber" x1="0" y1="0" x2="1" y2="1"><stop stopColor="#fcc34d" /><stop offset="1" stopColor="#fb9d2b" /></linearGradient></defs>
              <rect width="43" height="43" rx="8" fill="url(#amber)" />
              <rect x="8" y="10" width="27.500" height="20.500" rx="2" fill="#fffaf0" />
              <path d="M18 30h7v3h4v2H14.500v-2H18z" fill="#fff3dc" />
              <path d="M12 14v12.500h20" stroke="#fbe0b0" />
              <path d="M15.500 24l4-5.500 5 4.500 6-7" stroke="#f8a637" strokeWidth="2" /><circle cx="19.500" cy="18.500" r="1.700" fill="#f8a637" /><circle cx="24.500" cy="22.700" r="1.700" fill="#f8a637" />
            </svg>
            <PromoTitle>分时顶底</PromoTitle>
            <PromoSub>实时高低点<svg width="7" height="11"><path d="M0 0l7 5.500L0 11z" fill="#5f5f5f" /></svg></PromoSub>
            <Expand>
              <svg width="22" height="22" viewBox="0 0 22 22" fill="none" stroke="#6a6a6a" strokeWidth="2.200"><path d="M1.500 10.500v-9h9M20.500 12v9h-9" /></svg>
            </Expand>
          </Promo>
        </ChartColumn>
        <OrderBook />
      </Market>

      <Sentiment>
        <Composer>
          <Danmu>弹
            <svg width="14" height="14" viewBox="0 0 14 14" fill="none"><circle cx="7" cy="7" r="7" fill="#f4393a" /><path d="M3.500 7l2.500 3 4.500-5" stroke="#fff" strokeWidth="1.600" /></svg>
          </Danmu>
          <Placeholder>发条弹幕见证<span>A</span>股</Placeholder>
          <Gift />
        </Composer>
        <Votes><Vote $up>看涨<span>58%</span></Vote><Vote>看跌<span>42%</span></Vote></Votes>
      </Sentiment>
      <Band />

      <Sections>
        <Section $w={100}>看点</Section>
        <Section $w={100}>资讯</Section>
        <Section $w={100}>盘口</Section>
        <Section $w={101}>资金</Section>
        <Section $w={165} $on>简况(F10)<Underline $w={28} $x={46} $b={4} /></Section>
        <Section $w={100}>诊股</Section>
        <Section $w={100}>财务</Section>
      </Sections>

      <Toolbar>
        <Tools>
          <Index>
            <svg width="16" height="9"><path d="M8 0l8 9H0z" fill="#b5b5b5" /></svg>
            <Num $size={25} $color={DOWN} $k={0.89} $from="center">3850.19</Num>
            <IndexChange><span>上证</span><Num $size={21.5} $color={DOWN} $k={0.94}>−0.47%</Num></IndexChange>
          </Index>
          <Tool $w={168}>
            <svg width="36" height="37" viewBox="1 0 36 37" fill="none" stroke="#a8a8a8" strokeWidth="1.600" strokeLinejoin="round"><path d="M5 2h18.500l8.500 9.500V34a1 1 0 0 1 -1 1H5a1 1 0 0 1 -1 -1V3a1 1 0 0 1 1 -1zM23.500 2v9.500H32M11 17.500h14M11 26h14" /></svg>
            下单
          </Tool>
          <Tool $w={154}>
            <svg width="36" height="37" viewBox="1 0 36 37" fill="none" stroke="#a8a8a8" strokeWidth="1.600" strokeLinejoin="round"><path d="M20.500 4A15 15 0 0 1 35.200 19V34H20.500a15 15 0 0 1 0-30zM11 2a19 19 0 0 0 0 33.500M20.500 10.500l2.700 5.500 6 .9-4.300 4.300 1 6-5.400-2.900-5.400 2.900 1-6-4.300-4.300 6-.9z" /></svg>
            社区
          </Tool>
          <Tool $w={161}>
            <svg width="36" height="37" viewBox="-1 0 36 37" fill="none" stroke="#a8a8a8" strokeWidth="1.600"><rect x="1.500" y="4" width="33" height="29.500" rx="1" /><path d="M10 19h16" /></svg>
            删自选
          </Tool>
          <Tool $w={159}>
            <svg width="36" height="37" viewBox="0 0 36 37" fill="none" stroke="#a8a8a8" strokeWidth="1.600"><circle cx="18" cy="19" r="15.500" /><path d="M12.500 14h11M12.500 19h11M12.500 24h11" /></svg>
            功能
          </Tool>
        </Tools>
        <HomeBar />
      </Toolbar>
    </Screen>
  );
}
